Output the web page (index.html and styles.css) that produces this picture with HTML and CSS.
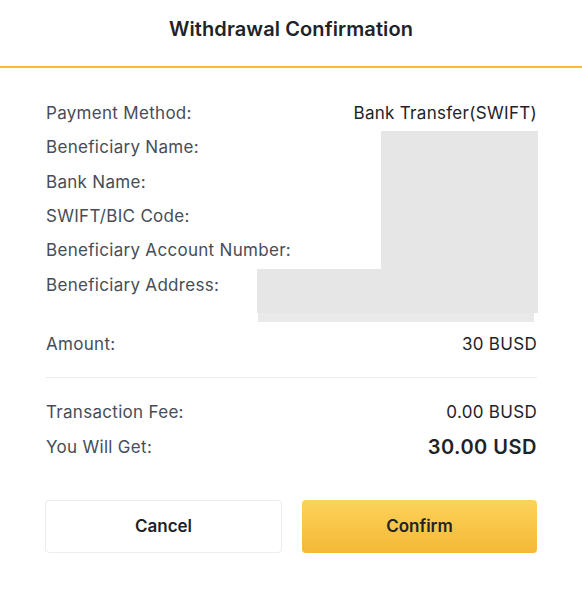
FILE: index.html
```html
<!DOCTYPE html>
<html>
<head>
    <title>Withdrawal Confirmation</title>
    <link rel="stylesheet" href="styles.css">
</head>
<body>
    <div class="modal">
        <div class="modal-header">Withdrawal Confirmation</div>

        <div class="modal-body">
            <div class="details">
                <div class="row"><span class="label">Payment Method:</span><span class="value">Bank Transfer(SWIFT)</span></div>
                <div class="row"><span class="label">Beneficiary Name:</span></div>
                <div class="row"><span class="label">Bank Name:</span></div>
                <div class="row"><span class="label">SWIFT/BIC Code:</span></div>
                <div class="row"><span class="label">Beneficiary Account Number:</span></div>
                <div class="row"><span class="label">Beneficiary Address:</span></div>

                <!-- redacted info -->
                <div class="mask mask-top"></div>
                <div class="mask mask-bottom"></div>
                <div class="mask mask-strip"></div>
            </div>

            <div class="row row-amount"><span class="label">Amount:</span><span class="value">30 BUSD</span></div>

            <div class="divider"></div>

            <div class="row"><span class="label">Transaction Fee:</span><span class="value">0.00 BUSD</span></div>
            <div class="row"><span class="label">You Will Get:</span><span class="value total">30.00 USD</span></div>

            <div class="actions">
                <button type="button" class="btn btn-cancel">Cancel</button>
                <button type="button" class="btn btn-confirm">Confirm</button>
            </div>
        </div>
    </div>
</body>
</html>
```
FILE: styles.css
```css
body {margin: 0; background: #fff; font-family: Inter, "Open Sans", Arial, sans-serif; color: #1e2329;}
.modal {width: 582px; height: 602px; background: #fff;}
.modal-header {height: 68px; line-height: 58px; text-align: center; font-size: 20px; font-weight: 600; letter-spacing: 0.1px; border-bottom: 2px solid #f5bc33; box-sizing: border-box;}
.modal-body {padding: 28px 45px 0 45px;}
.details {position: relative;}
.row {display: flex; justify-content: space-between; align-items: center; height: 34.3px; font-size: 17px; letter-spacing: 0.3px; padding: 0 0 0 1px;}
.label {color: #474d57;}
.value {color: #1e2329;}
.total {font-size: 20px; font-weight: 600; letter-spacing: 0.5px;}
.mask {position: absolute; background: #e6e6e6;}
.mask-top {left: 336px; right: -1px; top: 35px; height: 182px;}
.mask-bottom {left: 212px; right: 0; top: 173px; height: 44px;}
.mask-strip {left: 213px; right: 3px; top: 217px; height: 9px; background: #e9e9e9;}
.row-amount {margin-top: 25px;}
.divider {height: 1px; background: #eaecef; margin: 16px 0 17px 1px;}
.actions {display: flex; gap: 20px; margin-top: 36px;}
.btn {flex: 1; height: 53px; border-radius: 4px; font-family: inherit; font-size: 17px; font-weight: 600; color: #1e2329; cursor: pointer;}
.btn-cancel {background: #fff; border: 1px solid #eaecef;}
.btn-confirm {background: linear-gradient(180deg, #fcd35a 0%, #f5b836 100%); border: none;}
```
